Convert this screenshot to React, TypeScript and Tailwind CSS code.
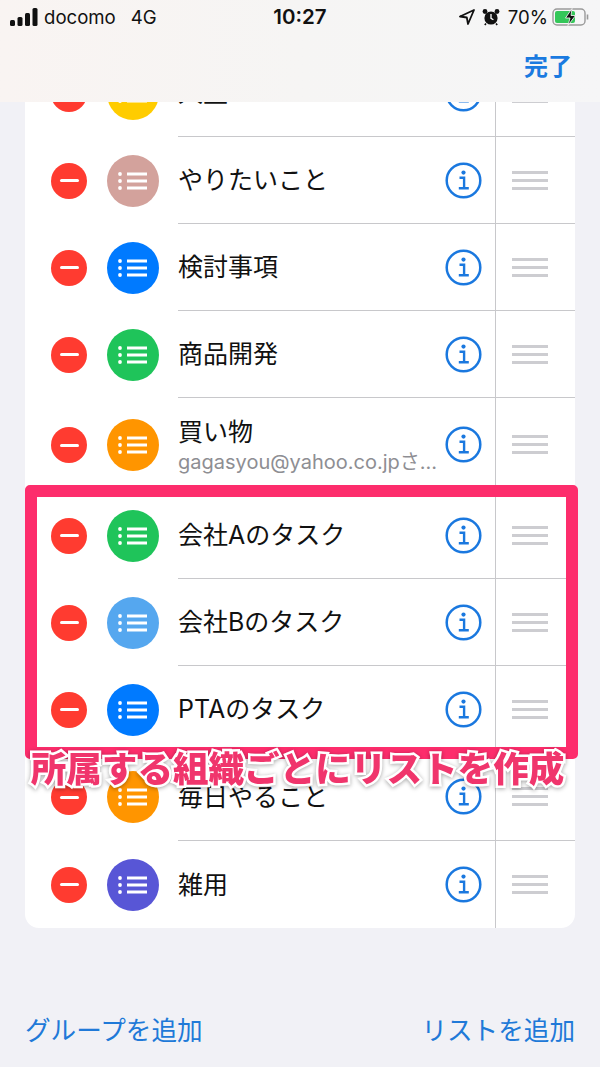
const FONT = "[font-family:Inter,'Noto_Sans_CJK_JP',sans-serif]";

interface ListRow {
  name: string;
  color: string;
  sub?: string;
  height: string;
}

const rows: ListRow[] = [
  { name: "人生", color: "bg-[#ffcc00]", height: "h-[87px]" },
  { name: "やりたいこと", color: "bg-[#d3a29c]", height: "h-[87px]" },
  { name: "検討事項", color: "bg-[#007aff]", height: "h-[87px]" },
  { name: "商品開発", color: "bg-[#1fc45a]", height: "h-[87px]" },
  { name: "買い物", color: "bg-[#ff9500]", sub: "gagasyou@yahoo.co.jpさ…", height: "h-[94px]" },
  { name: "会社Aのタスク", color: "bg-[#1fc45a]", height: "h-[87px]" },
  { name: "会社Bのタスク", color: "bg-[#55a7ef]", height: "h-[87px]" },
  { name: "PTAのタスク", color: "bg-[#007aff]", height: "h-[87px]" },
  { name: "毎日やること", color: "bg-[#ff9500]", height: "h-[88px]" },
  { name: "雑用", color: "bg-[#5856d6]", height: "h-[87px]" },
];

function InfoIcon() {
  return (
    <svg width="37" height="37" viewBox="0 0 37 37" fill="none" className="shrink-0 translate-x-[1px]">
      <circle cx="18.5" cy="18.5" r="16.8" stroke="#1a78df" strokeWidth="2.5" />
      <circle cx="18.5" cy="10.6" r="2.1" fill="#1a78df" />
      <path d="M14.5 15.8h4.6v10M13.8 26.2h10" stroke="#1a78df" strokeWidth="2.4" />
    </svg>
  );
}

function ListIcon() {
  return (
    <svg width="30" height="20" viewBox="0 0 30 20" fill="none">
      <circle cx="2" cy="3" r="1.9" fill="white" />
      <circle cx="2" cy="10" r="1.9" fill="white" />
      <circle cx="2" cy="17" r="1.9" fill="white" />
      <path d="M9 3h20M9 10h20M9 17h20" stroke="white" strokeWidth="3" />
    </svg>
  );
}

function Row({ row, last }: { row: ListRow; last: boolean }) {
  return (
    <div className={`flex items-center ${row.height}`}>
      <div className="flex w-[153px] shrink-0 items-center pl-[26px]">
        <div className="flex h-[36px] w-[36px] items-center justify-center rounded-full bg-[#ff3b30]">
          <div className="h-[3px] w-[19px] rounded-full bg-white" />
        </div>
        <div className={`ml-[20px] flex h-[52px] w-[52px] items-center justify-center rounded-full ${row.color}`}>
          <ListIcon />
        </div>
      </div>
      <div className={`flex h-full min-w-0 flex-1 ${last ? "" : "border-b border-[#c8c8cb]"}`}>
        <div className="flex min-w-0 flex-1 items-center pr-[14px]">
          <div className="min-w-0 flex-1">
            <div className="text-[25px] leading-[34px] text-[#111]">{row.name}</div>
            {row.sub && (
              <div className="text-[20px] leading-[26px] whitespace-nowrap text-[#8e8e93]">{row.sub}</div>
            )}
          </div>
          <InfoIcon />
        </div>
        <div className="flex w-[80px] shrink-0 flex-col justify-center gap-[5px] border-l border-[#c8c8cb] pl-[16px]">
          <div className="h-[3px] w-[36px] bg-[#cdcdd1]" />
          <div className="h-[3px] w-[36px] bg-[#cdcdd1]" />
          <div className="h-[3px] w-[36px] bg-[#cdcdd1]" />
        </div>
      </div>
    </div>
  );
}

function StatusBar() {
  return (
    <div className="flex h-[34px] items-center justify-between text-[#111]">
      <div className="flex w-[200px] items-center pl-[10px]">
        <svg width="28" height="18" viewBox="0 0 28 18" fill="#111">
          <rect x="0" y="12" width="5" height="6" rx="1.5" />
          <rect x="7.5" y="9" width="5" height="9" rx="1.5" />
          <rect x="15" y="5" width="5" height="13" rx="1.5" />
          <rect x="22.5" y="0" width="5" height="18" rx="1.5" />
        </svg>
        <span className="ml-[6px] text-[18.6px] leading-none">docomo</span>
        <span className="ml-[15px] text-[18.6px] leading-none">4G</span>
      </div>
      <span className="text-[20.5px] font-semibold leading-none">10:27</span>
      <div className="flex w-[200px] items-center justify-end pr-[10px]">
        <svg width="16" height="16" viewBox="0 0 16 16" fill="none">
          <path d="M15 1 1 7.5l6.8 1 1.2 6.5z" stroke="#111" strokeWidth="1.8" strokeLinejoin="round" />
        </svg>
        <svg width="18" height="18" viewBox="0 0 18 18" className="ml-[7px]" fill="#111">
          <circle cx="9" cy="10" r="6.6" />
          <circle cx="3" cy="3.5" r="2.4" />
          <circle cx="15" cy="3.5" r="2.4" />
          <path d="M9 6v4.4l2.4 1.4" stroke="white" strokeWidth="1.3" fill="none" />
          <path d="M4 15.5 2.8 17M14 15.5l1.2 1.5" stroke="#111" strokeWidth="1.6" />
        </svg>
        <span className="ml-[8px] text-[18.6px] leading-none">70%</span>
        <svg width="38" height="18" viewBox="0 0 38 18" className="ml-[4px]" fill="none">
          <rect x="1" y="1" width="32" height="16" rx="4" stroke="#9a9a9a" strokeWidth="1.4" />
          <rect x="3" y="3" width="20" height="12" rx="2" fill="#34c759" />
          <path d="M35.5 6.5v5" stroke="#9a9a9a" strokeWidth="1.6" />
          <path d="M20 0.5 13.5 10h4.5l-2 7.5L23.5 7.5h-4.5z" fill="#111" stroke="white" strokeWidth="0.8" />
        </svg>
      </div>
    </div>
  );
}

export default function App() {
  return (
    <div className={`relative h-[1067px] w-[600px] overflow-hidden bg-[#f1f1f6] ${FONT}`}>
      <div className="px-[25px] pt-[50px]">
        <div className="overflow-hidden rounded-[14px] bg-white">
          {rows.map((row, i) => (
            <Row key={row.name} row={row} last={i === rows.length - 1} />
          ))}
        </div>
        <div className="mt-[85px] flex justify-between text-[25.6px] leading-[36px] text-[#2079d8]">
          <span>グループを追加</span>
          <span>リストを追加</span>
        </div>
      </div>

      {/* translucent nav bar over the scrolled list */}
      <div className="absolute inset-x-0 top-0 h-[102px] bg-gradient-to-r from-[#f9f4f2] via-[#f6f5f4] to-[#f6f6f7]">
        <StatusBar />
        <div className="flex justify-end pr-[28px] pt-[13px] text-[24px] font-bold leading-[40px] text-[#1a7ae0]">
          完了
        </div>
      </div>

      {/* annotation added on top of the screenshot */}
      <div className="absolute left-[25px] top-[485px] h-[274px] w-[553px] rounded-[5px] border-[12px] border-[#fd2d6c]" />
      <div className="absolute inset-x-0 top-[745px] flex justify-center pr-[5px] text-[35.6px] font-black leading-[50px] whitespace-nowrap text-[#f0356c] [-webkit-text-stroke:5px_white] [paint-order:stroke_fill] [filter:drop-shadow(0_1px_2px_rgba(0,0,0,0.35))]">
        所属する組織ごとにリストを作成
      </div>
    </div>
  );
}
